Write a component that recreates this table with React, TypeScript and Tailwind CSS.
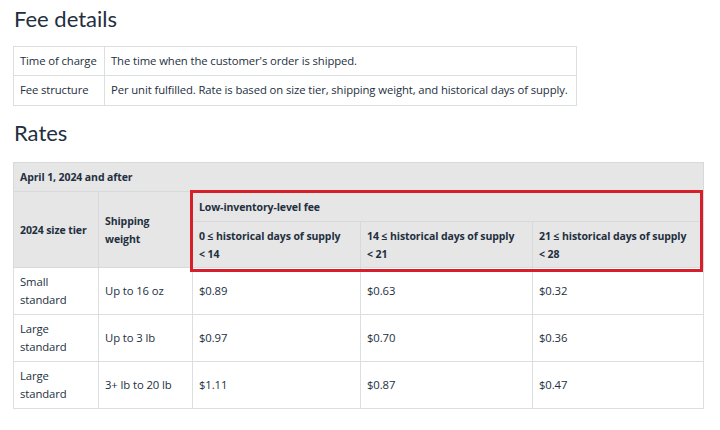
export default function App() {
  const rows = [
    { tier: ["Small", "standard"], weight: "Up to 16 oz", fees: ["$0.89", "$0.63", "$0.32"] },
    { tier: ["Large", "standard"], weight: "Up to 3 lb", fees: ["$0.97", "$0.70", "$0.36"] },
    { tier: ["Large", "standard"], weight: "3+ lb to 20 lb", fees: ["$1.11", "$0.87", "$0.47"] },
  ];
  const ranges = [
    ["0", "14"],
    ["14", "21"],
    ["21", "28"],
  ];

  return (
    <div className="w-[720px] h-[430px] bg-white text-[#232f3e] px-[13px] pt-[5px] font-['Lato','Liberation_Sans',sans-serif] overflow-hidden">
      <h2 className="text-[22px] leading-[28px] font-normal pl-[1px]">Fee details</h2>

      {/* fee details table */}
      <table className="mt-[13px] w-[564px] border-collapse text-[11.3px] table-fixed font-['Open_Sans','Liberation_Sans',sans-serif] tracking-[-0.1px]">
        <colgroup>
          <col className="w-[91px]" />
          <col />
        </colgroup>
        <tbody>
          <tr className="h-[29px]">
            <td className="border border-[#dcdfe0] px-[6px]">Time of charge</td>
            <td className="border border-[#dcdfe0] px-[6px]">The time when the customer's order is shipped.</td>
          </tr>
          <tr className="h-[30px]">
            <td className="border border-[#dcdfe0] px-[6px]">Fee structure</td>
            <td className="border border-[#dcdfe0] px-[6px]">
              Per unit fulfilled. Rate is based on size tier, shipping weight, and historical days of supply.
            </td>
          </tr>
        </tbody>
      </table>

      <h2 className="mt-[13px] text-[22px] leading-[28px] font-normal pl-[1px]">Rates</h2>

      {/* rates table */}
      <div className="relative mt-[15px] w-[691px]">
        <table className="w-full border-collapse text-[11.3px] leading-[18px] table-fixed font-['Open_Sans','Liberation_Sans',sans-serif] tracking-[-0.1px]">
          <colgroup>
            <col className="w-[85px]" />
            <col className="w-[94px]" />
            <col className="w-[168px]" />
            <col className="w-[172px]" />
            <col />
          </colgroup>
          <thead className="bg-[#e6e6e6] text-left text-[10.5px]">
            <tr className="h-[29px]">
              <th colSpan={5} className="border border-[#d7d9da] px-[6px] font-bold">April 1, 2024 and after</th>
            </tr>
            <tr className="h-[30px]">
              <th rowSpan={2} className="border border-[#d7d9da] px-[6px] font-bold">2024 size tier</th>
              <th rowSpan={2} className="border border-[#d7d9da] px-[6px] font-bold">Shipping weight</th>
              <th colSpan={3} className="border border-[#d7d9da] px-[6px] font-bold">Low-inventory-level fee</th>
            </tr>
            <tr className="h-[46px]">
              {ranges.map(([lo, hi]) => (
                <th key={lo} className="border border-[#d7d9da] px-[6px] font-bold">
                  {lo} ≤ historical days of supply
                  <br />
                  &lt; {hi}
                </th>
              ))}
            </tr>
          </thead>
          <tbody>
            {rows.map((r, i) => (
              <tr key={i} className="h-[47px]">
                <td className="border border-[#dcdfe0] px-[6px]">
                  {r.tier[0]}
                  <br />
                  {r.tier[1]}
                </td>
                <td className="border border-[#dcdfe0] px-[6px]">{r.weight}</td>
                {r.fees.map((f, j) => (
                  <td key={j} className="border border-[#dcdfe0] px-[6px]">{f}</td>
                ))}
              </tr>
            ))}
          </tbody>
        </table>
        {/* red highlight box */}
        <div className="absolute left-[177px] top-[28px] w-[513px] h-[82px] border-[3px] border-[#d71f2b] pointer-events-none" />
      </div>
    </div>
  );
}
